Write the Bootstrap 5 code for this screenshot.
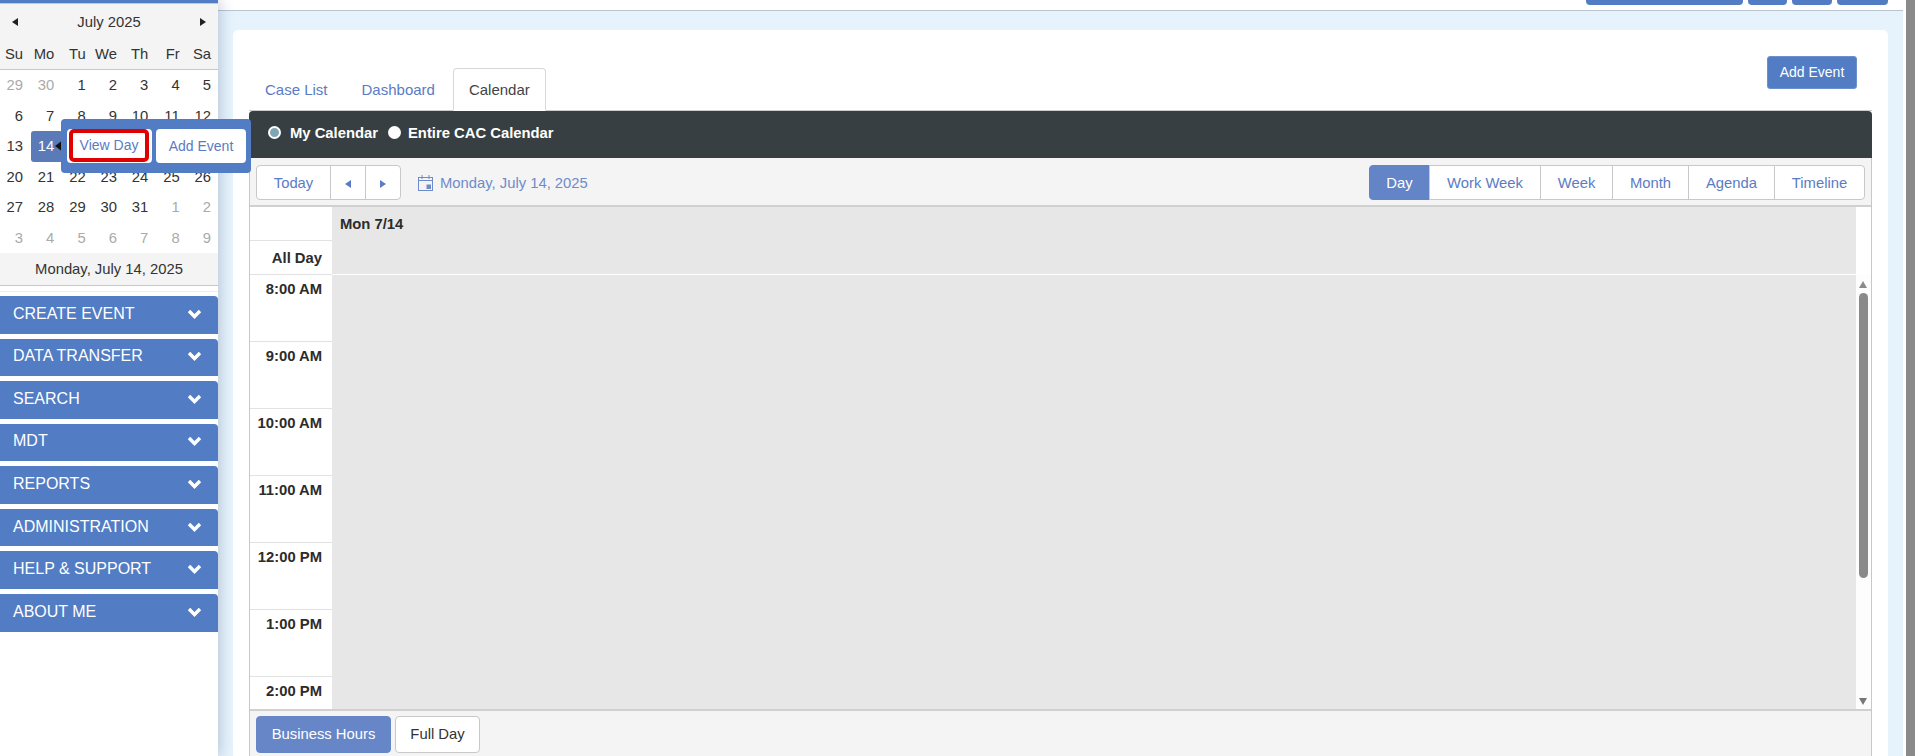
<!DOCTYPE html>
<html lang="en">
<head>
  <meta charset="UTF-8">
  <title>Calendar</title>
  <link href="https://cdn.jsdelivr.net/npm/bootstrap@5.3.2/dist/css/bootstrap.min.css" rel="stylesheet">
  <style>
    html, body { height: 100%; overflow: hidden; }
    body { font-family: "Liberation Sans", Arial, sans-serif; font-size: 14.8px; color: #333; background: #fff; }
    .page-wrap { height: 756px; overflow: hidden; }

    /* left column */
    .side-col { width: 218px; flex: 0 0 218px; position: relative; z-index: 3; background: #fff; box-shadow: 3px 0 12px rgba(90, 110, 140, .3); height: 756px; }
    .side-top { height: 3px; background: #527cc4; }
    .cal-head { background: #f4f4f4; border-top: 1px solid #c8c8c8; border-bottom: 1px solid #c8c8c8; }
    .cal-title { height: 36px; padding: 0 12px; }
    .tri-l, .tri-r { display: inline-block; width: 0; height: 0; border-top: 4px solid transparent; border-bottom: 4px solid transparent; }
    .tri-l { border-right: 6px solid #222; }
    .tri-r { border-left: 6px solid #222; }
    .tri-link.tri-l { border-right-color: #5b7bc4; }
    .tri-link.tri-r { border-left-color: #5b7bc4; }
    .mini-cal { width: 218px; table-layout: fixed; border-collapse: collapse; }
    .mini-cal th { font-weight: 400; text-align: right; padding: 0 7px 0 0; height: 29px; }
    .mini-cal td { text-align: right; padding: 0 7px 0 0; height: 30.5px; }
    .mini-cal th:first-child, .mini-cal tr:first-child td:first-child { width: 30px; }
    .mini-cal td.off { color: #aaa; }
    .mini-cal td.sel { position: relative; color: #fff; }
    .sel-box { position: absolute; left: 1px; right: -1.5px; top: 0; bottom: 0; background: #5b7bb8; border-radius: 3px; }
    .sel-num { position: relative; }
    .sel-arrow { position: absolute; right: -1.5px; top: 50%; margin-top: -6px; border-top: 6px solid transparent; border-bottom: 6px solid transparent; border-right: 8px solid #111; }
    .cal-foot { height: 33px; background: #f4f4f4; border-bottom: 1px solid #c8c8c8; }
    .foot-rule { height: 1px; background: #eee; margin-top: 5px; margin-bottom: 4px; }
    .menu-item { height: 37.57px; margin-bottom: 5px; padding: 0 16px 2px 13px; background: #527cc4; color: #fff; border-top-right-radius: 4px; font-size: 16px; text-transform: uppercase; }

    /* popup over the mini calendar */
    .day-pop { position: absolute; left: 61px; top: 119px; width: 190px; height: 54px; padding: 10px 5px 0 6px; background: #527cc4; border-radius: 4px; z-index: 5; }
    .pop-btn { height: 34px; background: #fff; color: #5b7bc4; border-radius: 4px; font-size: 14px; padding: 0; border: 0; }
    .pop-view { width: 85px; padding: 0 3px 1px 2px; }
    .pop-view span { display: flex; align-items: center; justify-content: center; height: 33px; border: 4px solid #e00000; border-radius: 5px; width: 80px; }
    .pop-add { width: 90px; margin-left: 4px; }

    /* right side */
    .main-col { background: #e6f3fd; min-width: 0; }
    .top-strip { height: 11px; background: #fff; border-bottom: 1px solid #b8c4d0; padding-right: 15px; gap: 5px; }
    .top-btn { height: 5px; background: #527cc4; border-radius: 0 0 4px 4px; }
    .w-a { width: 157px; } .w-b { width: 39px; } .w-c { width: 40px; } .w-d { width: 51px; }
    .main-card { margin: 19px 15px 0; background: #fff; border-radius: 5px; padding: 27px 16px 0; height: 740px; }
    .tab-row { height: 54px; border-bottom: 1px solid #ccc; }
    .tab-row .nav-tabs { border-bottom: 0; height: 43px; gap: 2px; }
    .tab-row .nav-link { color: #5b7bc4; padding: 0 16px; font-size: 15px; line-height: 46px; height: 43px; border: 0; margin: 0; }
    .tab-row .nav-link.active { color: #444; border: 1px solid #d8d8d8; border-bottom: 1px solid #fff; border-radius: 4px 4px 0 0; padding: 0 15px; margin-top: 1px; line-height: 42px; height: 43px; }
    .add-btn { width: 90px; height: 33px; margin: -1px 15px 0 0; padding: 0 0 1px; background: #527cc4; border: 1px solid #6d90cc; color: #fff; font-size: 14px; border-radius: 3px; }
    .filter-bar { height: 47px; background: #383f42; color: #fff; font-weight: 700; padding: 0 0 3px 19px; border-top-right-radius: 4px; border-top-left-radius: 4px; }
    .radio-dot { appearance: none; width: 13px; height: 13px; border-radius: 50%; background: #fff; margin: 0 9px 2px 0; flex: none; }
    .radio-dot:checked { background: #7fa6b5; border: 2.5px solid #fff; }
    .filter-bar label { margin: 0 10px 0 0; }
    .filter-bar label + .radio-dot { margin-right: 7px; }
    .cal-panel { border-left: 1px solid #c8c8c8; border-right: 1px solid #c8c8c8; }
    .cal-tools { height: 49px; background: #f4f4f4; border-bottom: 2px solid #d0d0d0; padding: 2px 6px 0 6px; }
    .seg-btn { height: 35px; background: #fff; color: #5b7bc4; border: 1px solid #c8c8c8; font-size: 14.8px; padding: 1px 0 0; border-radius: 0; margin-left: -1px; }
    .seg-btn:first-child { border-radius: 4px 0 0 4px; margin-left: 0; }
    .seg-btn:last-child { border-radius: 0 4px 4px 0; }
    .seg-btn.on { background: #6384c6; border-color: #6384c6; color: #fff; }
    .w-today { width: 75px; } .w-arrow { width: 36px; } .w-next { width: 36px; }
    .w-day { width: 61px; } .w-work { width: 112px; } .w-week { width: 73px; } .w-month { width: 77px; } .w-agenda { width: 87px; } .w-time { width: 91px; }
    .date-link { color: #6f8bc9; margin-left: 17px; padding-top: 1px; gap: 7px; }

    .cal-grid { height: 502px; overflow: hidden; }
    .time-col { width: 82px; flex: none; font-weight: 700; color: #2c2c2c; text-align: right; }
    .head-cell { height: 34px; border-bottom: 1px solid #e2e2e2; }
    .all-cell { height: 34px; border-bottom: 1px solid #e2e2e2; padding: 6px 10px 0 0; }
    .hour-cell { height: 67px; border-bottom: 1px solid #e2e2e2; padding: 3px 10px 0 0; }
    .day-col { background: #e7e7e7; min-width: 0; }
    .day-head { height: 68px; border-bottom: 1px solid #fff; padding: 6px 9px 0 8px; font-weight: 700; color: #2c2c2c; }
    .scroll-col { width: 15px; flex: none; position: relative; }
    .scroll-track { position: absolute; left: 0; right: 0; top: 68px; bottom: 0; background: #fdfdfd; }
    .sc-up, .sc-down { position: absolute; left: 3px; width: 0; height: 0; border-left: 4.5px solid transparent; border-right: 4.5px solid transparent; }
    .sc-up { top: 6px; border-bottom: 7px solid #8a8a8a; }
    .sc-down { bottom: 4px; border-top: 7px solid #777; }
    .sc-thumb { position: absolute; left: 3px; width: 9px; top: 18px; height: 285px; background: #8a8a8a; border-radius: 5px; }
    .cal-foot-bar { background: #f4f4f4; border-top: 2px solid #d0d0d0; padding: 5px 6px; gap: 4px; height: 60px; }
    .hours-btn { height: 37px; font-size: 14.8px; padding: 0; border-radius: 4px; }
    .hours-on { width: 135px; background: #6686c8; border: 1px solid #6686c8; color: #fff; }
    .hours-off { width: 85px; background: #fff; border: 1px solid #c8c8c8; color: #333; }

    .page-scroll { width: 14px; flex: none; background: #fff; padding: 0 2px 0 3px; }
    .page-thumb { height: 756px; background: #8a8a8a; }
  </style>
</head>
<body>
  <div class="page-wrap d-flex">
    <div class="side-col">
      <div class="side-top"></div>
      <div class="cal-head">
        <div class="cal-title d-flex align-items-center justify-content-between">
          <span class="tri-l"></span>
          <span>July 2025</span>
          <span class="tri-r"></span>
        </div>
        <table class="mini-cal">
          <tr><th>Su</th><th>Mo</th><th>Tu</th><th>We</th><th>Th</th><th>Fr</th><th>Sa</th></tr>
        </table>
      </div>
      <table class="mini-cal">
        <tr><td class="off">29</td><td class="off">30</td><td>1</td><td>2</td><td>3</td><td>4</td><td>5</td></tr>
        <tr><td>6</td><td>7</td><td>8</td><td>9</td><td>10</td><td>11</td><td>12</td></tr>
        <tr><td>13</td><td class="sel"><span class="sel-box"></span><span class="sel-num">14</span><span class="sel-arrow"></span></td><td>15</td><td>16</td><td>17</td><td>18</td><td>19</td></tr>
        <tr><td>20</td><td>21</td><td>22</td><td>23</td><td>24</td><td>25</td><td>26</td></tr>
        <tr><td>27</td><td>28</td><td>29</td><td>30</td><td>31</td><td class="off">1</td><td class="off">2</td></tr>
        <tr><td class="off">3</td><td class="off">4</td><td class="off">5</td><td class="off">6</td><td class="off">7</td><td class="off">8</td><td class="off">9</td></tr>
      </table>
      <div class="cal-foot d-flex align-items-center justify-content-center">Monday, July 14, 2025</div>
      <div class="foot-rule"></div>
      <div class="menu-item d-flex align-items-center justify-content-between"><span>Create Event</span><svg width="15" height="10" viewBox="0 0 15 10"><polyline points="2,2 7.5,7.5 13,2" fill="none" stroke="#fff" stroke-width="3.4"/></svg></div>
      <div class="menu-item d-flex align-items-center justify-content-between"><span>Data Transfer</span><svg width="15" height="10" viewBox="0 0 15 10"><polyline points="2,2 7.5,7.5 13,2" fill="none" stroke="#fff" stroke-width="3.4"/></svg></div>
      <div class="menu-item d-flex align-items-center justify-content-between"><span>Search</span><svg width="15" height="10" viewBox="0 0 15 10"><polyline points="2,2 7.5,7.5 13,2" fill="none" stroke="#fff" stroke-width="3.4"/></svg></div>
      <div class="menu-item d-flex align-items-center justify-content-between"><span>MDT</span><svg width="15" height="10" viewBox="0 0 15 10"><polyline points="2,2 7.5,7.5 13,2" fill="none" stroke="#fff" stroke-width="3.4"/></svg></div>
      <div class="menu-item d-flex align-items-center justify-content-between"><span>Reports</span><svg width="15" height="10" viewBox="0 0 15 10"><polyline points="2,2 7.5,7.5 13,2" fill="none" stroke="#fff" stroke-width="3.4"/></svg></div>
      <div class="menu-item d-flex align-items-center justify-content-between"><span>Administration</span><svg width="15" height="10" viewBox="0 0 15 10"><polyline points="2,2 7.5,7.5 13,2" fill="none" stroke="#fff" stroke-width="3.4"/></svg></div>
      <div class="menu-item d-flex align-items-center justify-content-between"><span>Help &amp; Support</span><svg width="15" height="10" viewBox="0 0 15 10"><polyline points="2,2 7.5,7.5 13,2" fill="none" stroke="#fff" stroke-width="3.4"/></svg></div>
      <div class="menu-item d-flex align-items-center justify-content-between"><span>About Me</span><svg width="15" height="10" viewBox="0 0 15 10"><polyline points="2,2 7.5,7.5 13,2" fill="none" stroke="#fff" stroke-width="3.4"/></svg></div>

      <div class="day-pop d-flex align-items-start">
        <button class="pop-btn pop-view" type="button"><span>View Day</span></button>
        <button class="pop-btn pop-add" type="button">Add Event</button>
      </div>
    </div>

    <div class="main-col flex-grow-1">
      <div class="top-strip d-flex justify-content-end">
        <div class="top-btn w-a"></div><div class="top-btn w-b"></div><div class="top-btn w-c"></div><div class="top-btn w-d"></div>
      </div>
      <div class="main-card">
        <div class="tab-row d-flex justify-content-between align-items-start">
          <ul class="nav nav-tabs align-self-end">
            <li class="nav-item"><a class="nav-link" href="#">Case List</a></li>
            <li class="nav-item"><a class="nav-link" href="#">Dashboard</a></li>
            <li class="nav-item"><a class="nav-link active" href="#">Calendar</a></li>
          </ul>
          <button class="add-btn" type="button">Add Event</button>
        </div>
        <div class="filter-bar d-flex align-items-center">
          <input class="radio-dot" type="radio" name="calsel" id="mine" checked>
          <label for="mine">My Calendar</label>
          <input class="radio-dot" type="radio" name="calsel" id="entire">
          <label for="entire">Entire CAC Calendar</label>
        </div>
        <div class="cal-panel">
          <div class="cal-tools d-flex align-items-center justify-content-between">
            <div class="d-flex align-items-center">
              <div class="d-flex">
                <button class="seg-btn w-today" type="button">Today</button>
                <button class="seg-btn w-arrow" type="button"><span class="tri-l tri-link"></span></button>
                <button class="seg-btn w-next" type="button"><span class="tri-r tri-link"></span></button>
              </div>
              <div class="date-link d-flex align-items-center">
                <svg width="15" height="16" viewBox="0 0 15 16"><rect x=".5" y="2.5" width="14" height="13" fill="none" stroke="#6f8bc9"/><path d="M1 5.5h13" stroke="#6f8bc9" fill="none"/><path d="M4 0v4M11 0v4" stroke="#6f8bc9" fill="none"/><rect x="8.5" y="9.5" width="4.5" height="4.5" fill="#6f8bc9"/></svg>
                <span>Monday, July 14, 2025</span>
              </div>
            </div>
            <div class="d-flex">
              <button class="seg-btn on w-day" type="button">Day</button>
              <button class="seg-btn w-work" type="button">Work Week</button>
              <button class="seg-btn w-week" type="button">Week</button>
              <button class="seg-btn w-month" type="button">Month</button>
              <button class="seg-btn w-agenda" type="button">Agenda</button>
              <button class="seg-btn w-time" type="button">Timeline</button>
            </div>
          </div>
          <div class="cal-grid d-flex">
            <div class="time-col">
              <div class="head-cell"></div>
              <div class="all-cell">All Day</div>
              <div class="hour-cell">8:00 AM</div>
              <div class="hour-cell">9:00 AM</div>
              <div class="hour-cell">10:00 AM</div>
              <div class="hour-cell">11:00 AM</div>
              <div class="hour-cell">12:00 PM</div>
              <div class="hour-cell">1:00 PM</div>
              <div class="hour-cell">2:00 PM</div>
            </div>
            <div class="day-col flex-grow-1">
              <div class="day-head">Mon 7/14</div>
            </div>
            <div class="scroll-col">
              <div class="scroll-track">
                <span class="sc-up"></span>
                <span class="sc-thumb"></span>
                <span class="sc-down"></span>
              </div>
            </div>
          </div>
          <div class="cal-foot-bar d-flex">
            <button class="hours-btn hours-on" type="button">Business Hours</button>
            <button class="hours-btn hours-off" type="button">Full Day</button>
          </div>
        </div>
      </div>
    </div>
    <div class="page-scroll"><div class="page-thumb"></div></div>
  </div>
  <script src="https://cdn.jsdelivr.net/npm/bootstrap@5.3.2/dist/js/bootstrap.bundle.min.js"></script>
</body>
</html>
